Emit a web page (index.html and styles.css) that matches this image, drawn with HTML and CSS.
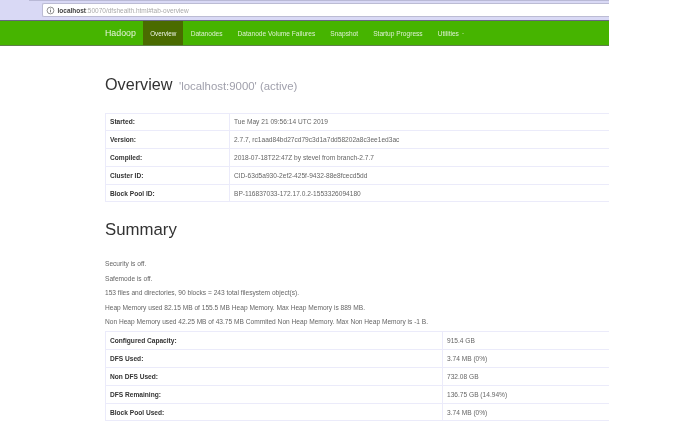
FILE: index.html
```html
<!DOCTYPE html>
<html lang="en">
<head>
<meta charset="utf-8">
<title>Namenode information</title>
<link rel="stylesheet" href="styles.css">
</head>
<body>
<div class="page">
  <div class="chrome">
    <div class="tabline"></div>
    <div class="urlbar">
      <svg class="info" width="9" height="9" viewBox="0 0 9 9"><circle cx="4.5" cy="4.5" r="3.4" fill="none" stroke="#666" stroke-width=".7"/><path d="M4.5 4v2.4M4.5 2.5v.9" stroke="#666" stroke-width=".8"/></svg>
      <span class="host">localhost</span><span class="path">:50070/dfshealth.html#tab-overview</span>
    </div>
  </div>
  <nav class="navbar">
    <span class="brand">Hadoop</span>
    <a class="item active">Overview</a>
    <a class="item">Datanodes</a>
    <a class="item">Datanode Volume Failures</a>
    <a class="item">Snapshot</a>
    <a class="item">Startup Progress</a>
    <a class="item">Utilities <span class="caret"></span></a>
  </nav>
  <main class="content">
    <h1 class="title">Overview <small class="sub">'localhost:9000' (active)</small></h1>
    <table class="info-table first">
      <tr><th>Started:</th><td>Tue May 21 09:56:14 UTC 2019</td></tr>
      <tr><th>Version:</th><td>2.7.7, rc1aad84bd27cd79c3d1a7dd58202a8c3ee1ed3ac</td></tr>
      <tr><th>Compiled:</th><td>2018-07-18T22:47Z by stevel from branch-2.7.7</td></tr>
      <tr><th>Cluster ID:</th><td>CID-63d5a930-2ef2-425f-9432-88e8fcecd5dd</td></tr>
      <tr><th>Block Pool ID:</th><td>BP-116837033-172.17.0.2-1553326094180</td></tr>
    </table>
    <h2 class="heading">Summary</h2>
    <p class="line">Security is off.</p>
    <p class="line">Safemode is off.</p>
    <p class="line">153 files and directories, 90 blocks = 243 total filesystem object(s).</p>
    <p class="line">Heap Memory used 82.15 MB of 155.5 MB Heap Memory. Max Heap Memory is 889 MB.</p>
    <p class="line">Non Heap Memory used 42.25 MB of 43.75 MB Commited Non Heap Memory. Max Non Heap Memory is -1 B.</p>
    <table class="info-table second">
      <tr><th>Configured Capacity:</th><td>915.4 GB</td></tr>
      <tr><th>DFS Used:</th><td>3.74 MB (0%)</td></tr>
      <tr><th>Non DFS Used:</th><td>732.08 GB</td></tr>
      <tr><th>DFS Remaining:</th><td>136.75 GB (14.94%)</td></tr>
      <tr><th>Block Pool Used:</th><td>3.74 MB (0%)</td></tr>
    </table>
  </main>
</div>
</body>
</html>
```
FILE: styles.css
```css
html, body { margin: 0; padding: 0; background: #fff; height: 421px; overflow: hidden; }
body { font-family: "Liberation Sans", Arial, sans-serif; color: #333; }
.page { width: 609px; filter: blur(0.35px); }
.chrome { height: 21px; box-sizing: border-box; background: #d9d9f5; border-bottom: 1px solid #666680; padding-left: 42px; }
.tabline { height: 1px; margin-left: -13px; background: #b9b9d6; }
.urlbar { height: 14px; box-sizing: border-box; margin-top: 2px; background: #fff; border: 1px solid #bcbcd4; border-right: 0; border-radius: 2px 0 0 2px; display: flex; align-items: center; font-size: 6.5px; color: #aaa; }
.info { margin: 0 3px 0 2.5px; }
.host { color: #444; font-weight: bold; }
.navbar { height: 25px; box-sizing: border-box; background: #46b400; border-bottom: 1px solid #5f7f49; display: flex; align-items: stretch; padding-left: 105px; color: #dcefd0; font-size: 6.6px; }
.brand { font-size: 8.8px; color: #e6f3dc; margin-right: 7.5px; align-self: center; }
.item { display: flex; align-items: center; padding: 0 7.5px; }
.item.active { background: #4a6b00; color: #eef5e6; font-size: 6.3px; padding: 0 6.8px; }
.caret { display: inline-block; width: 0; height: 0; margin-left: 3px; border: 1.5px solid transparent; border-top-color: #b4dc9a; border-bottom: 0; }
.content { padding-left: 105px; }
.title { margin: 28px 0 0; font-size: 16.2px; font-weight: 400; line-height: 20px; color: #333; }
.sub { font-size: 11.4px; color: #a0a0ac; margin-left: 2px; }
.info-table { width: 504px; border-collapse: collapse; table-layout: fixed; font-size: 6.6px; }
.info-table th, .info-table td { height: 17.8px; padding: 0 4px; box-sizing: border-box; border: 1px solid #ebebfa; border-right: 0; text-align: left; color: #666; font-weight: 400; }
.info-table th { color: #333; font-weight: 700; }
.first { margin-top: 16.5px; }
.first th { width: 124px; }
.heading { margin: 18px 0 0; font-size: 16.8px; font-weight: 400; line-height: 20px; color: #333; }
.line { margin: 0; font-size: 6.6px; height: 14.4px; line-height: 14.4px; color: #666; }
.heading + .line { margin-top: 17px; }
.second { margin-top: 2px; }
.second th { width: 337px; }
```
